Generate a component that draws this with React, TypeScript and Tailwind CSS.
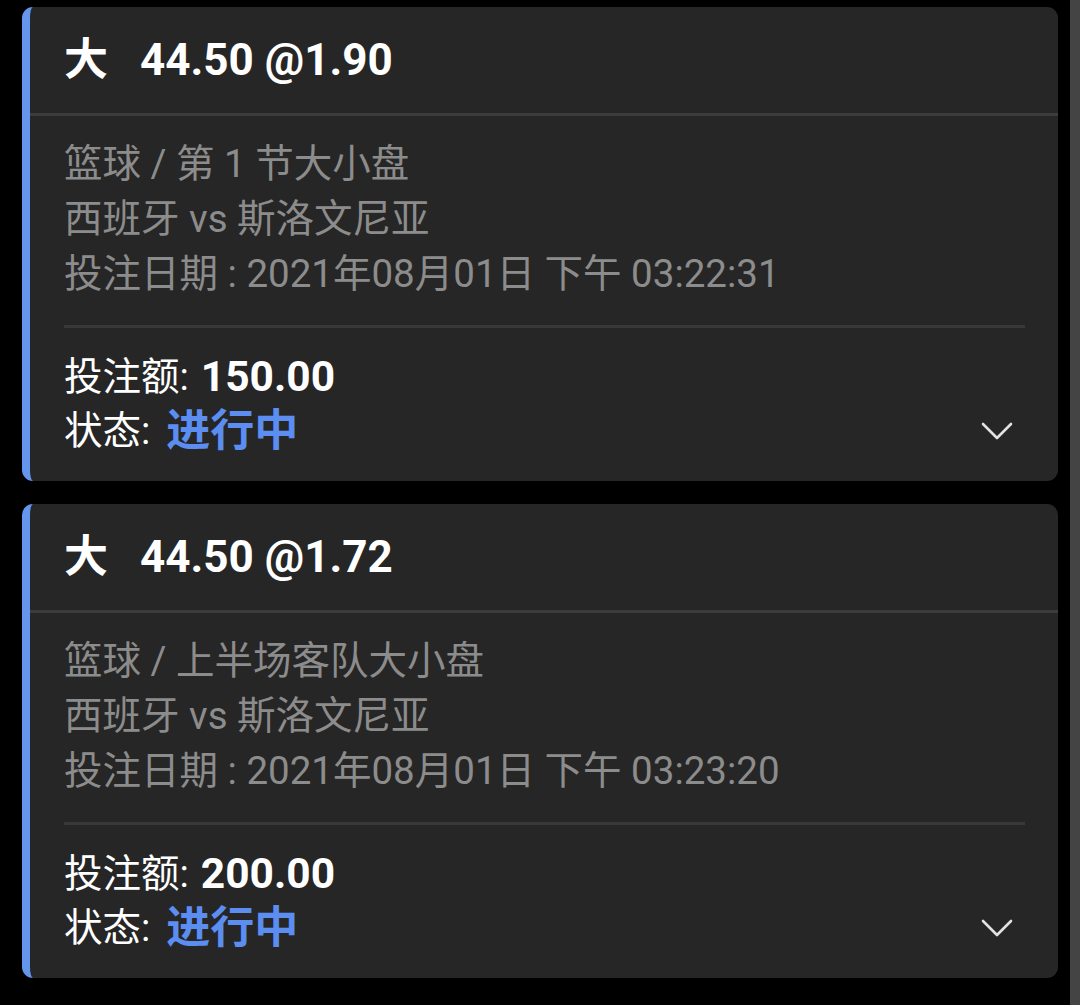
import React from "react";

type Bet = {
  pick: string;
  line: string;
  odds: string;
  market: string;
  match: string;
  placedAt: string;
  stake: string;
  status: string;
};

const bets: Bet[] = [
  {
    pick: "大",
    line: "44.50",
    odds: "1.90",
    market: "篮球 / 第 1 节大小盘",
    match: "西班牙 vs 斯洛文尼亚",
    placedAt: "投注日期 : 2021年08月01日 下午 03:22:31",
    stake: "150.00",
    status: "进行中",
  },
  {
    pick: "大",
    line: "44.50",
    odds: "1.72",
    market: "篮球 / 上半场客队大小盘",
    match: "西班牙 vs 斯洛文尼亚",
    placedAt: "投注日期 : 2021年08月01日 下午 03:23:20",
    stake: "200.00",
    status: "进行中",
  },
];

function Chevron() {
  return (
    <svg width="32" height="20" viewBox="0 0 32 20" fill="none">
      <polyline
        points="2,3 16,17 30,3"
        stroke="#e2e2e2"
        strokeWidth="2.6"
        strokeLinecap="round"
        strokeLinejoin="round"
      />
    </svg>
  );
}

function BetCard({ bet }: { bet: Bet }) {
  return (
    <div className="bg-[#262626] rounded-[11px] border-l-[8px] border-[#6496ee] overflow-hidden">
      <div className="h-[106px] flex items-center pl-[34px] text-white font-bold text-[44px]">
        <span>{bet.pick}</span>
        <span className="ml-[32px]">
          {bet.line} @{bet.odds}
        </span>
      </div>
      <div className="h-[3px] bg-[#3c3c3c]" />
      <div className="pl-[34px] pt-[20px] pb-[24px] text-[38.5px] leading-[55px] text-[#8c8c8c]">
        <p>{bet.market}</p>
        <p>{bet.match}</p>
        <p>{bet.placedAt}</p>
      </div>
      <div className="ml-[34px] mr-[33px] h-[3px] bg-[#383838]" />
      <div className="pl-[34px] pr-[45px] pt-[22px] pb-[23px] flex items-end justify-between">
        <div className="text-[38.5px] text-white">
          <p className="h-[54px] flex items-center">
            <span>投注额:</span>
            <span className="ml-[12px] font-bold text-[42.5px]">{bet.stake}</span>
          </p>
          <p className="h-[54px] flex items-center">
            <span>状态:</span>
            <span className="ml-[16px] font-bold text-[44px] text-[#5b8ef0]">{bet.status}</span>
          </p>
        </div>
        <div className="h-[54px] flex items-center">
          <Chevron />
        </div>
      </div>
    </div>
  );
}

export default function App() {
  return (
    <div
      className="w-[1080px] h-[1005px] bg-black flex overflow-hidden"
      style={{ fontFamily: 'Roboto, "Noto Sans CJK SC", sans-serif' }}
    >
      <div className="flex-1 pl-[22px] pr-[12px] pt-[7px] flex flex-col gap-[23px]">
        {bets.map((bet, index) => (
          <BetCard key={index} bet={bet} />
        ))}
      </div>
      <div className="w-[10px] bg-[#444444]" />
    </div>
  );
}
